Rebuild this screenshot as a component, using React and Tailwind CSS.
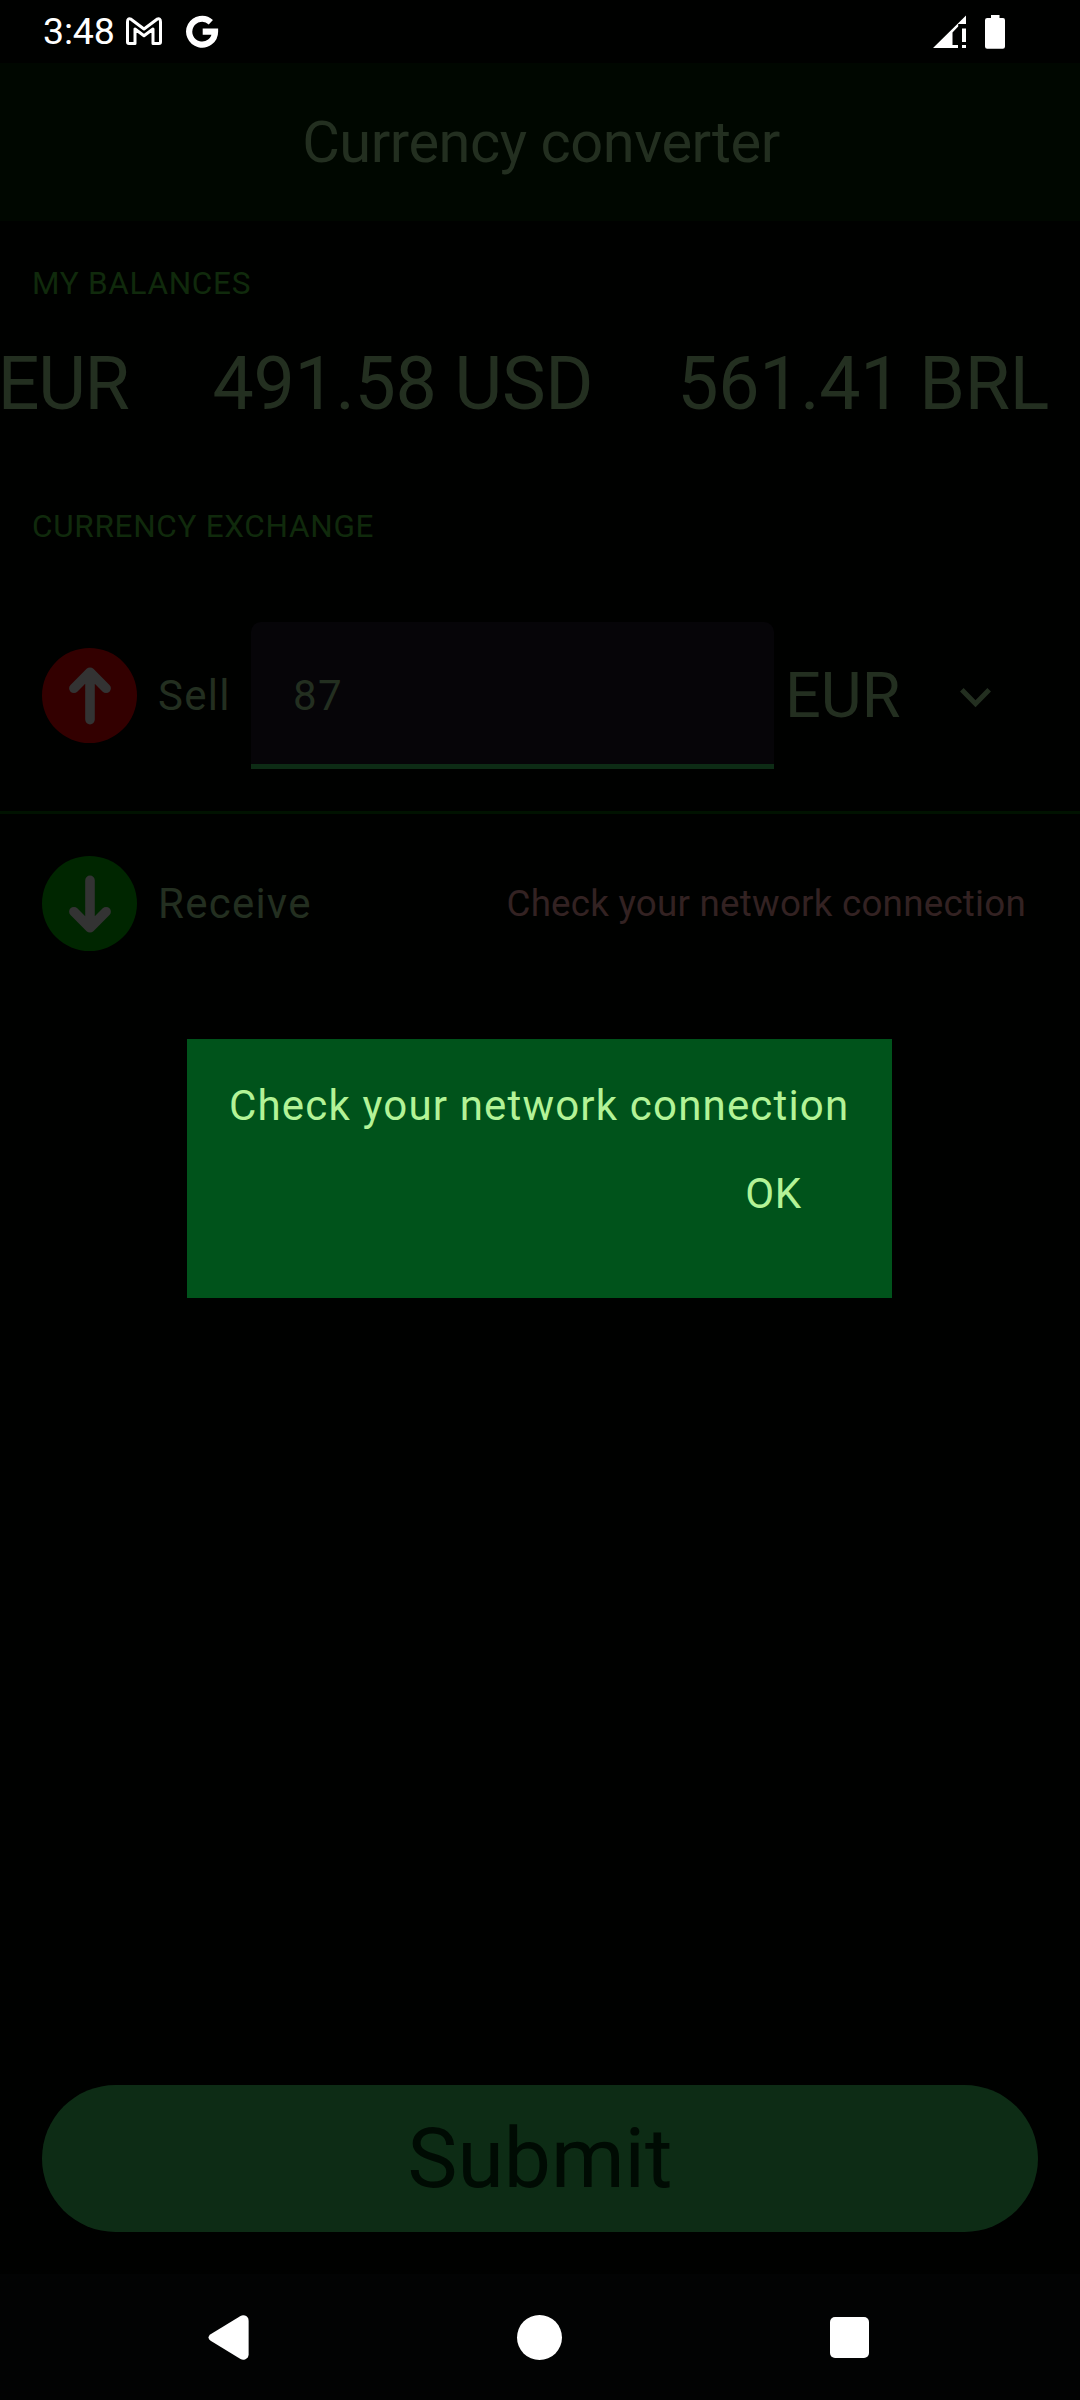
function GmailIcon() {
  return (
    <svg className="-mt-[2px] h-[28px] w-[36px]" viewBox="0 0 36 28" fill="none" stroke="white" strokeWidth="3" strokeLinejoin="round">
      <path d="M5 2.2L18 12L31 2.2Q34.5 0.6 34.5 5V25Q34.5 26.5 33 26.5H27V12L18 18.8L9 12V26.5H3Q1.5 26.5 1.5 25V5Q1.5 0.6 5 2.2Z" />
    </svg>
  );
}

function GoogleIcon() {
  return (
    <svg className="h-[33px] w-[33px]" viewBox="0 0 34 34" fill="none" stroke="white" strokeWidth="6.4">
      <path d="M25.6 7.4A13.3 13.3 0 1 0 29.9 17.2H17.2" />
    </svg>
  );
}

function StatusBar() {
  return (
    <header className="flex h-[63px] items-center bg-[#000100] pl-[43px] pr-[75px]">
      <span className="-mt-[2px] w-[83px] text-[37.5px] leading-[44px] tracking-[-0.2px] text-white">3:48</span>
      <GmailIcon />
      <div className="ml-[24px] flex">
        <GoogleIcon />
      </div>
      <div className="ml-auto flex items-center gap-[19px]">
        <svg className="h-[34px] w-[33px]" viewBox="0 0 33 34" fill="white">
          <path d="M0 33L33 0.5V9H25.2V11.5L19.5 17.5V30H25V33Z" />
          <path d="M29 13.5H33V27H29ZM29 30H33V33H29Z" />
        </svg>
        <svg className="h-[34px] w-[20px]" viewBox="0 0 20 34" fill="white">
          <path d="M6 0H14.5V3H18Q20 3 20 5.2V31.6Q20 33.8 17.8 33.8H2.2Q0 33.8 0 31.6V5.2Q0 3 2.2 3H6Z" />
        </svg>
      </div>
    </header>
  );
}

function ArrowBadge({ color, down }) {
  return (
    <div className={`flex h-[95px] w-[95px] shrink-0 items-center justify-center rounded-full ${color}`}>
      <svg
        className={`h-[58px] w-[42px] ${down ? "rotate-180" : ""}`}
        viewBox="0 0 42 58"
        fill="none"
        stroke="#333333"
        strokeWidth="9.6"
        strokeLinecap="round"
        strokeLinejoin="round"
      >
        <path d="M21 52.6V6.4M4.9 21.3L21 5.2L37.1 21.3" />
      </svg>
    </div>
  );
}

function SectionTitle({ children }) {
  return <h2 className="pl-[32px] text-[31.5px] leading-[42px] tracking-[0.7px] text-[#102a0c]">{children}</h2>;
}

function Dialog() {
  return (
    <div className="absolute left-[187px] top-[1039px] flex h-[259px] w-[705px] flex-col bg-[#00531b] px-[42px] pt-[37px] text-[42px] leading-[60px] text-[#b3f397]">
      <p className="whitespace-nowrap tracking-[1.18px]">Check your network connection</p>
      <button className="mr-[48px] mt-[28px] self-end tracking-[0.8px]">OK</button>
    </div>
  );
}

export default function App() {
  return (
    <div className="relative flex h-[2400px] w-[1080px] flex-col overflow-hidden bg-[#000100] font-['Roboto',sans-serif] text-[#232f20]">
      <StatusBar />
      <div className="flex h-[158px] items-center justify-center bg-[#000700]">
        <h1 className="pl-[2px] text-[57.75px] leading-[74px] tracking-[-0.45px]">Currency converter</h1>
      </div>

      <main className="flex flex-1 flex-col">
        <div className="pt-[42px]">
          <SectionTitle>MY BALANCES</SectionTitle>
        </div>
        <div className="mt-[31px] flex justify-end gap-[84px] whitespace-nowrap pr-[31px] text-[73.5px] leading-[96px] tracking-[-0.3px]">
          <span className="tracking-[-1.3px]">EUR</span>
          <span>491.58 USD</span>
          <span>561.41 BRL</span>
        </div>
        <div className="mt-[74px]">
          <SectionTitle>CURRENCY EXCHANGE</SectionTitle>
        </div>

        <section className="mt-[74px] flex h-[192px] items-start border-b-3 border-[#001200] pl-[42px]">
          <div className="flex h-[147px] items-center">
            <ArrowBadge color="bg-[#330000]" />
            <span className="w-[114px] shrink-0 pl-[21px] text-[42px] tracking-[1.31px]">Sell</span>
            <div className="flex h-[147px] w-[523px] items-center rounded-t-[10px] border-b-5 border-[#0d2c15] bg-[#060508] pl-[42px] pt-[5px] text-[42px] tracking-[1.31px]">
              87
            </div>
            <span className="w-[186px] pl-[11px] pt-[2px] text-[63px]">EUR</span>
            <svg className="mt-[4px] h-[20px] w-[31px]" viewBox="0 0 31 20" fill="none" stroke="#232f20" strokeWidth="5">
              <path d="M1.8 1.8L15.5 15.8L29.2 1.8" />
            </svg>
          </div>
        </section>

        <section className="flex items-center pl-[42px] pr-[54px] pt-[42px]">
          <ArrowBadge color="bg-[#002600]" down />
          <span className="pl-[21px] text-[42px] tracking-[1.25px]">Receive</span>
          <span className="ml-auto text-[36.75px] tracking-[0.23px] text-[#332222]">Check your network connection</span>
        </section>

        <div className="mt-auto px-[42px] pb-[42px]">
          <button className="flex h-[147px] w-full items-center justify-center rounded-full bg-[#0d2c15] text-[84px] text-[#000b03]">
            Submit
          </button>
        </div>
      </main>

      <nav className="flex h-[126px] items-center bg-[#020303] pl-[208px]">
        <svg className="h-[45px] w-[41px]" viewBox="0 0 41 45" fill="white">
          <path d="M2.6 19.2L32.5 0.9Q34.8 -0.2 37 0.6Q40.6 2 40.6 5.5V39.5Q40.6 43 37 44.4Q34.8 45.2 32.5 44.1L2.6 25.8Q0.5 24.4 0.5 22.5Q0.5 20.6 2.6 19.2Z" />
        </svg>
        <div className="ml-[268px] h-[45px] w-[45px] rounded-full bg-white" />
        <div className="ml-[268px] h-[41px] w-[39px] rounded-[5px] bg-white" />
      </nav>

      <Dialog />
    </div>
  );
}
